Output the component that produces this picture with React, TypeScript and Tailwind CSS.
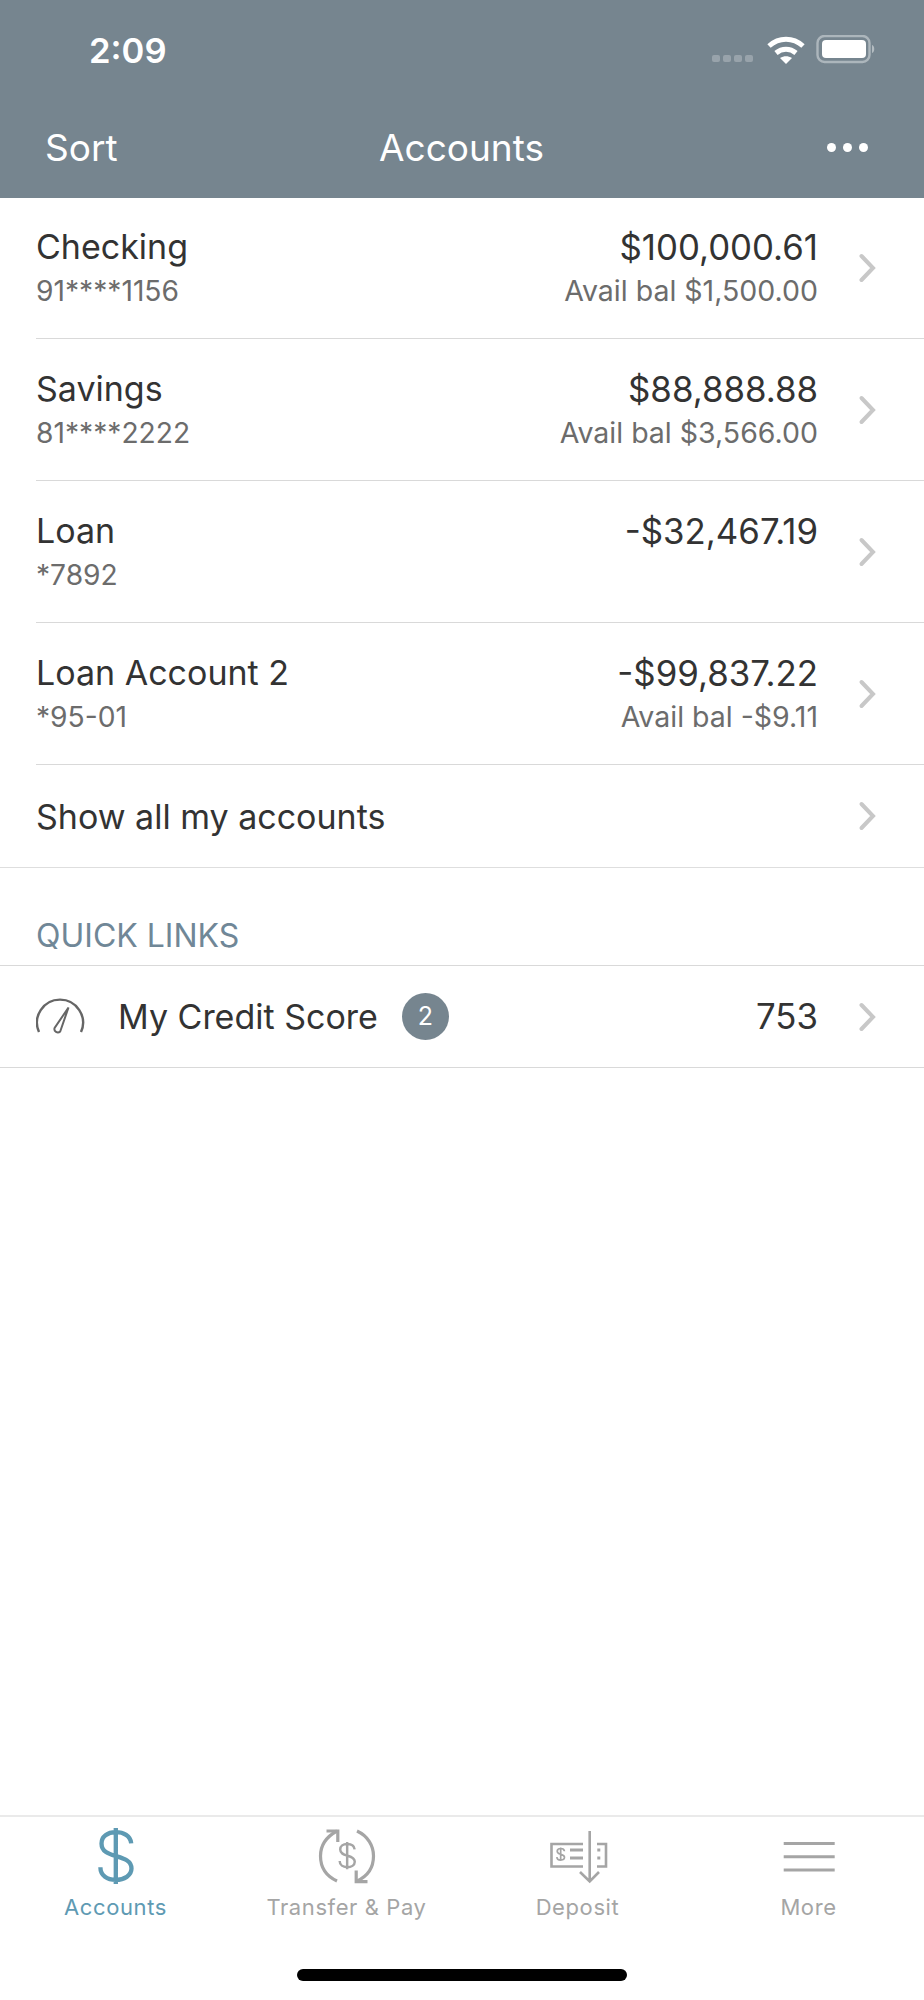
import React from 'react';

const FONT = "font-['Inter','Noto_Sans',sans-serif]";

const Chevron: React.FC = () => (
  <svg width="18" height="30" viewBox="0 0 18 30" className="shrink-0" fill="none" stroke="#c8c8c8" strokeWidth="4" strokeLinecap="round">
    <path d="M3.5 3 L15 15 L3.5 27" />
  </svg>
);

const StatusIcons: React.FC = () => (
  <svg width="164" height="30" viewBox="0 0 164 30">
    <g fill="#ffffff" fillOpacity="0.25">
      <rect x="0" y="20" width="8" height="7" rx="2" />
      <rect x="11" y="20" width="8" height="7" rx="2" />
      <rect x="22" y="20" width="8" height="7" rx="2" />
      <rect x="33" y="20" width="8" height="7" rx="2" />
    </g>
    <g fill="none" stroke="#ffffff" strokeWidth="5">
      <path d="M57 11 C67 2 81 2 91 11" />
      <path d="M64 18 C70 13 78 13 84 18" />
    </g>
    <path d="M68 23 C72 20.5 76 20.5 80 23 L74 29 Z" fill="#ffffff" />
    <rect x="105.5" y="1" width="52" height="26" rx="7" fill="none" stroke="#ffffff" strokeOpacity="0.4" strokeWidth="2.4" />
    <rect x="110" y="5" width="44" height="18" rx="4" fill="#ffffff" />
    <path d="M160 10 C163 11 163 17 160 18 Z" fill="#ffffff" fillOpacity="0.45" />
  </svg>
);

const DOLLAR = 'M23 11 C22.5 5.5 17.5 3 12 3 C6 3 1.8 6 1.8 11 C1.8 17 7 18.5 12 20 C17 21.5 23.2 23 23.2 29 C23.2 34 18 37 12 37 C6 37 1 34 1 28 M12 0 V40';

const TabIcon: React.FC<{ name: string }> = ({ name }) => {
  if (name === 'Accounts') {
    return (
      <svg width="64" height="60" viewBox="0 0 64 60" fill="none" stroke="#5e9ab3">
        <g transform="translate(15 2) scale(1.4)">
          <path d={DOLLAR} strokeWidth="3.1" />
        </g>
      </svg>
    );
  }
  if (name === 'Transfer & Pay') {
    return (
      <svg width="64" height="60" viewBox="0 0 64 60" fill="none" stroke="#a5a5a5" strokeWidth="3.2">
        <path d="M22 55 C11 50 5.5 41 5.5 30 C5.5 20 11 11 22 5" />
        <path d="M42 5 C53 10 58.5 20 58.5 30 C58.5 41 53 50 42 55" />
        <path d="M11.5 5 H22.8 V16" />
        <path d="M41.2 44.5 V55.7 H52.5" />
        <g transform="translate(24 16) scale(0.68)">
          <path d={DOLLAR} strokeWidth="3.6" />
        </g>
      </svg>
    );
  }
  if (name === 'Deposit') {
    return (
      <svg width="64" height="60" viewBox="0 0 64 60" fill="none" stroke="#a5a5a5" strokeWidth="2.6">
        <path d="M37 18 H5.5 V40.5 H37" />
        <path d="M51 18 H60 V40.5 H51" />
        <path d="M43.7 5 V55 M34 46 L43.7 55.5 L53 46" />
        <path d="M24 24 H37 M24 32 H37" strokeWidth="3" />
        <path d="M51.3 24 H54.3 M51.3 32 H54.3" strokeWidth="3" />
        <g transform="translate(10.6 21.5) scale(0.34)">
          <path d={DOLLAR} strokeWidth="5" />
        </g>
      </svg>
    );
  }
  return (
    <svg width="64" height="60" viewBox="0 0 64 60" fill="none" stroke="#a5a5a5" strokeWidth="3">
      <path d="M6.7 17.5 H57.7 M6.7 30.8 H57.7 M6.7 44 H57.7" />
    </svg>
  );
};

const accounts = [
  { name: 'Checking', num: '91****1156', bal: '$100,000.61', avail: 'Avail bal $1,500.00' },
  { name: 'Savings', num: '81****2222', bal: '$88,888.88', avail: 'Avail bal $3,566.00' },
  { name: 'Loan', num: '*7892', bal: '-$32,467.19', avail: '' },
  { name: 'Loan Account 2', num: '*95-01', bal: '-$99,837.22', avail: 'Avail bal -$9.11' },
];

const tabs = ['Accounts', 'Transfer & Pay', 'Deposit', 'More'];

const AccountRow: React.FC<(typeof accounts)[number]> = ({ name, num, bal, avail }) => (
  <div className="ml-[36px] h-[142px] first:h-[141px] flex items-center border-b border-[#d9d9d9] pr-[48px]">
    <div className="flex-1 pt-[2px]">
      <div className="text-[34px] leading-[44px] text-[#333333]">{name}</div>
      <div className="text-[28.2px] leading-[44px] text-[#6c6c6c]">{num}</div>
    </div>
    <div className="text-right pr-[40px] pt-[2px]">
      <div className="text-[34.8px] leading-[44px] text-[#333333]">{bal}</div>
      <div className="text-[28.5px] leading-[44px] text-[#6c6c6c] h-[44px]">{avail}</div>
    </div>
    <Chevron />
  </div>
);

const App: React.FC = () => {
  return (
    <div className={`${FONT} h-[2000px] w-[924px] bg-white flex flex-col overflow-hidden`}>
      <header className="h-[198px] bg-[#76858f] text-white shrink-0">
        <div className="pt-[35px] h-[65px] flex items-center justify-between pl-[89px] pr-[48px]">
          <span className="text-[34.6px] leading-[30px] font-semibold">2:09</span>
          <StatusIcons />
        </div>
        <div className="mt-[55px] h-[56px] grid grid-cols-3 items-center pl-[45px] pr-[46px]">
          <span className="text-[37px]">Sort</span>
          <span className="text-[37px] text-center whitespace-nowrap">Accounts</span>
          <div className="flex justify-end gap-[7px] pr-[10px] pb-[2px]">
            <span className="w-[9px] h-[9px] rounded-full bg-white" />
            <span className="w-[9px] h-[9px] rounded-full bg-white" />
            <span className="w-[9px] h-[9px] rounded-full bg-white" />
          </div>
        </div>
      </header>

      <main className="flex-1">
        {accounts.map((a) => (
          <AccountRow key={a.name} {...a} />
        ))}
        <div className="h-[103px] flex items-center justify-between border-b border-[#dedede] pl-[36px] pr-[48px]">
          <span className="text-[34px] text-[#333333]">Show all my accounts</span>
          <Chevron />
        </div>
        <div className="h-[98px] border-b border-[#d9d9d9] pl-[36px] pt-[46px]">
          <span className="block text-[32px] leading-[44px] text-[#708797]">QUICK LINKS</span>
        </div>
        <div className="h-[102px] flex items-center border-b border-[#d9d9d9] pl-[36px] pr-[48px]">
          <svg width="50" height="40" viewBox="0 0 50 40" className="shrink-0" fill="none" stroke="#666666" strokeWidth="2.4">
            <path d="M3 35 A 23 23 0 1 1 45 35" />
            <path d="M32.5 10.5 L18.6 31 A3.4 3.4 0 0 0 24.2 34.5 Z" strokeWidth="2" />
          </svg>
          <span className="ml-[32px] text-[34px] text-[#333333]">My Credit Score</span>
          <span className="ml-[24px] w-[47px] h-[47px] rounded-full bg-[#76858f] text-white text-[25px] flex items-center justify-center">2</span>
          <span className="flex-1 text-right pr-[40px] text-[34.8px] text-[#333333]">753</span>
          <Chevron />
        </div>
      </main>

      <footer className="h-[185px] shrink-0 border-t-2 border-[#eaeaea]">
        <div className="grid grid-cols-4 pt-[9px]">
          {tabs.map((t) => (
            <div key={t} className="flex flex-col items-center">
              <TabIcon name={t} />
              <span className={`mt-[6px] text-[22px] leading-[30px] tracking-[0.6px] whitespace-nowrap ${t === 'Accounts' ? 'text-[#5e9ab3]' : 'text-[#a5a5a5]'}`}>
                {t}
              </span>
            </div>
          ))}
        </div>
        <div className="mt-[47px] mx-auto w-[330px] h-[12px] rounded-full bg-black" />
      </footer>
    </div>
  );
};

export default App;
